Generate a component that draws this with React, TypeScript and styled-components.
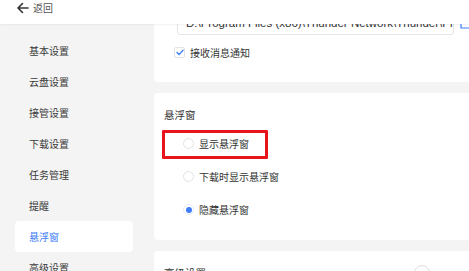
import React from 'react'
import styled, { createGlobalStyle } from 'styled-components'

const GlobalStyle = createGlobalStyle`
  html, body {
    margin: 0;
    padding: 0;
    background: #f4f4f4;
    overflow: hidden;
  }
  body {
    font-family: 'Noto Sans CJK SC', 'Noto Sans', sans-serif;
    color: #333;
  }
`

const BLUE = '#3f7ef7'

const Page = styled.div`
  width: 469px;
  height: 271px;
  display: flex;
  flex-direction: column;
  overflow: hidden;
  background: #f4f4f4;
`

const Header = styled.div`
  height: 24px;
  flex: none;
  background: #fff;
  display: flex;
  align-items: flex-start;
  padding: 2px 0 0 16px;
  box-sizing: border-box;
  gap: 4px;
  box-shadow: 0 1px 2px rgba(0, 0, 0, 0.06);
  position: relative;
  z-index: 1;
`

const BackText = styled.span`
  font-size: 10px;
  line-height: 12px;
  color: #555;
`

const Body = styled.div`
  flex: 1;
  display: flex;
  min-height: 0;
`

const Sidebar = styled.nav`
  width: 154px;
  flex: none;
  padding: 11px 0 0 15px;
  box-sizing: border-box;
  display: flex;
  flex-direction: column;
`

const NavItem = styled.div<{ $active?: boolean }>`
  width: 118px;
  height: 31px;
  flex: none;
  display: flex;
  align-items: center;
  padding-left: 14px;
  box-sizing: border-box;
  font-size: 10px;
  border-radius: 4px;
  color: ${(p) => (p.$active ? BLUE : '#3a3a3a')};
  background: ${(p) => (p.$active ? '#fff' : 'transparent')};
`

const Main = styled.div`
  flex: 1;
  overflow: hidden;
  min-width: 0;
`

const Stack = styled.div`
  margin-top: -50px;
  display: flex;
  flex-direction: column;
  gap: 11px;
  width: 340px;
`

const Card = styled.section`
  background: #fff;
  border-radius: 4px;
  padding: 14px 10px 14px;
  position: relative;
`

const PathCard = styled(Card)`
  padding: 12px 10px 23px;
`

const CardTitle = styled.div`
  font-size: 10.5px;
  line-height: 16px;
  color: #333;
`

const PathRow = styled.div`
  display: flex;
  align-items: center;
  gap: 6px;
  margin: 8px 0 0 13px;
`

const PathInput = styled.div`
  width: 277px;
  height: 25px;
  border: 1px solid #e6e6e6;
  border-radius: 3px;
  box-sizing: border-box;
  display: flex;
  align-items: center;
  padding-left: 8px;
  font-family: 'Liberation Sans', sans-serif;
  font-size: 11.5px;
  white-space: nowrap;
  overflow: hidden;
  color: #333;
`

const CheckRow = styled.label`
  display: flex;
  align-items: center;
  gap: 5px;
  margin: 10px 0 0 10px;
  font-size: 10px;
  height: 14px;
`

const CheckBox = styled.span`
  width: 11px;
  height: 11px;
  border: 1px solid #e3e3e3;
  border-radius: 2px;
  box-sizing: border-box;
  display: flex;
  align-items: center;
  justify-content: center;
`

const Options = styled.div`
  display: flex;
  flex-direction: column;
  margin: 4px 0 0 19px;
`

const OptionRow = styled.label`
  height: 33px;
  display: flex;
  align-items: center;
  gap: 5px;
  font-size: 10px;
  color: #333;
  position: relative;
  width: max-content;
`

const Radio = styled.span<{ $checked?: boolean }>`
  width: 11px;
  height: 11px;
  border-radius: 50%;
  box-sizing: border-box;
  border: 1px solid ${(p) => (p.$checked ? '#e4ecfd' : '#e2e2e2')};
  display: flex;
  align-items: center;
  justify-content: center;
  &::after {
    content: '';
    width: 6px;
    height: 6px;
    border-radius: 50%;
    background: ${(p) => (p.$checked ? BLUE : 'transparent')};
  }
`

const Highlight = styled.span`
  position: absolute;
  left: -21px;
  right: -19px;
  top: 3px;
  bottom: 1px;
  border: 3px solid #e8141c;
  border-radius: 1px;
  pointer-events: none;
`

const TitleRow = styled.div`
  display: flex;
  align-items: center;
  justify-content: space-between;
  width: 266px;
`

const HelpRing = styled.span`
  width: 16px;
  height: 16px;
  border-radius: 50%;
  border: 1px solid #ddd;
  box-sizing: border-box;
`

const navItems = ['基本设置', '云盘设置', '接管设置', '下载设置', '任务管理', '提醒', '悬浮窗', '高级设置']

const floatOptions = [
  { label: '显示悬浮窗', checked: false, marked: true },
  { label: '下载时显示悬浮窗', checked: false, marked: false },
  { label: '隐藏悬浮窗', checked: true, marked: false },
]

export default function App() {
  return (
    <Page>
      <GlobalStyle />
      <Header>
        <svg width="13" height="12" viewBox="0 0 13 12" fill="none" stroke="#333" strokeWidth="1.6" strokeLinecap="round" strokeLinejoin="round">
          <path d="M12 6H2M6.5 1.5L2 6l4.5 4.5" />
        </svg>
        <BackText>返回</BackText>
      </Header>
      <Body>
        <Sidebar>
          {navItems.map((item) => (
            <NavItem key={item} $active={item === '悬浮窗'}>
              {item}
            </NavItem>
          ))}
        </Sidebar>
        <Main>
          <Stack>
            <PathCard>
              <CardTitle>下载目录</CardTitle>
              <PathRow>
                <PathInput>D:\Program Files (x86)\Thunder Network\Thunder\Program\Download</PathInput>
                <svg width="14" height="12" viewBox="0 0 14 12" fill="none" stroke={BLUE} strokeWidth="1.2">
                  <path d="M1 2h4l1.5 1.5H13V11H1z" />
                </svg>
              </PathRow>
              <CheckRow>
                <CheckBox>
                  <svg width="8" height="7" viewBox="0 0 8 7" fill="none" stroke={BLUE} strokeWidth="1.4" strokeLinecap="round" strokeLinejoin="round">
                    <path d="M1 3.6l2 2L7 1.2" />
                  </svg>
                </CheckBox>
                接收消息通知
              </CheckRow>
            </PathCard>
            <Card>
              <CardTitle>悬浮窗</CardTitle>
              <Options>
                {floatOptions.map((o) => (
                  <OptionRow key={o.label}>
                    <Radio $checked={o.checked} />
                    {o.label}
                    {o.marked && <Highlight />}
                  </OptionRow>
                ))}
              </Options>
            </Card>
            <Card>
              <TitleRow>
                <CardTitle>高级设置</CardTitle>
                <HelpRing />
              </TitleRow>
            </Card>
          </Stack>
        </Main>
      </Body>
    </Page>
  )
}
